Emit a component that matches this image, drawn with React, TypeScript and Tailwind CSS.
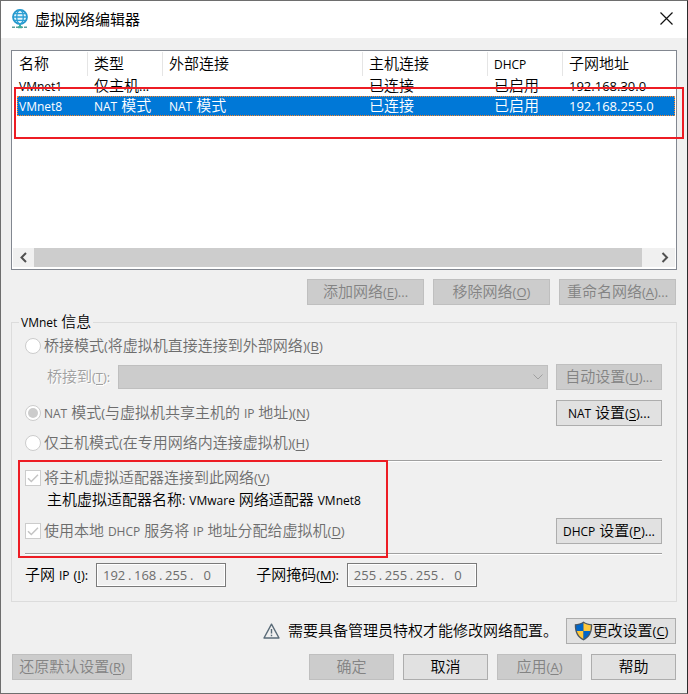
import { useId, type ReactNode } from "react";
import clsx from "clsx";

type Network = {
  name: string;
  type: string;
  external: string;
  host: string;
  dhcp: string;
  subnet: string;
};

const networks: Network[] = [
  {
    name: "VMnet1",
    type: "仅主机...",
    external: "-",
    host: "已连接",
    dhcp: "已启用",
    subnet: "192.168.30.0",
  },
  {
    name: "VMnet8",
    type: "NAT 模式",
    external: "NAT 模式",
    host: "已连接",
    dhcp: "已启用",
    subnet: "192.168.255.0",
  },
];

const columns = [
  { title: "名称", width: "w-[71px]" },
  { title: "类型", width: "w-[75px]" },
  { title: "外部连接", width: "w-[200px]" },
  { title: "主机连接", width: "w-[125px]" },
  { title: "DHCP", width: "w-[75px]" },
  { title: "子网地址", width: "" },
];

// Latin runs are set smaller than the Chinese text, words a step below
// punctuation and numbers; "&X" marks an access key.
function Caption({ text }: { text: string }) {
  return (
    <span className="inline-block pb-0.5 whitespace-nowrap">
      {text.split(/([\x21-\x7e]+)/).map((run, index) => {
        if (index % 2 === 0) {
          return run;
        }
        const [before, after] = run.split("&");
        return (
          <span
            className={clsx(
              "font-normal",
              /^[A-Za-z]/.test(run)
                ? "text-xs leading-none"
                : "text-[13px] leading-none",
            )}
            key={index}
          >
            {before}
            {after ? (
              <>
                <u className="underline-offset-2">{after[0]}</u>
                {after.slice(1)}
              </>
            ) : null}
          </span>
        );
      })}
    </span>
  );
}

function PushButton({
  text,
  disabled,
  className,
  icon,
}: {
  text: string;
  disabled?: boolean;
  className: string;
  icon?: ReactNode;
}) {
  return (
    <button
      className={clsx(
        "flex h-[26px] shrink-0 items-center justify-center border leading-5",
        disabled
          ? "border-[#bfbfbf] bg-[#cccccc] text-[#838383]"
          : "border-[#adadad] bg-[#e1e1e1] text-black",
        className,
      )}
      disabled={disabled}
      type="button"
    >
      {icon}
      <Caption text={text} />
    </button>
  );
}

function ModeRadio({ text, checked }: { text: string; checked?: boolean }) {
  return (
    <label className="flex items-center gap-[3px] text-[#6d6d6d]">
      <input
        className="grid size-4 appearance-none place-items-center rounded-full border border-[#cccccc] bg-white before:size-2.5 before:rounded-full checked:before:bg-[#cccccc]"
        defaultChecked={checked}
        disabled
        name="mode"
        type="radio"
      />
      <Caption text={text} />
    </label>
  );
}

function OptionCheckbox({ text }: { text: string }) {
  return (
    <label className="flex items-center gap-[3px] text-[#6d6d6d]">
      <span className="grid size-4">
        <input
          className="col-start-1 row-start-1 size-4 appearance-none border border-[#cccccc] bg-white"
          defaultChecked
          disabled
          type="checkbox"
        />
        <svg
          className="pointer-events-none col-start-1 row-start-1 size-4"
          fill="none"
          stroke="#c4c4c4"
          strokeWidth="1.5"
          viewBox="0 0 16 16"
        >
          <path d="M3 8.2 6.3 11.5 13 4.8" />
        </svg>
      </span>
      <Caption text={text} />
    </label>
  );
}

function AddressField({ text, octets }: { text: string; octets: string[] }) {
  const id = useId();

  return (
    <div className="flex items-center gap-2">
      <label htmlFor={`${id}-0`}>
        <Caption text={text} />
      </label>
      <div className="flex h-6 w-[130px] items-center border border-[#7a7a7a] bg-[#f0f0f0] pl-1 text-[13px] font-normal text-[#6d6d6d] ring-1 ring-white ring-inset">
        {octets.map((octet, index) => (
          <span className="flex items-center" key={index}>
            {index > 0 ? <span className="w-[5px] text-center">.</span> : null}
            <input
              aria-label={`${index + 1}`}
              className="w-[26px] text-center"
              defaultValue={octet}
              disabled
              id={`${id}-${index}`}
            />
          </span>
        ))}
      </div>
    </div>
  );
}

function Divider() {
  return <div className="h-0.5 border-t border-[#a0a0a0] bg-white" />;
}

function NetworkTable() {
  return (
    <div className="relative border border-[#828790] bg-white p-px">
      <div className="h-[196px] pl-1">
        <table className="w-full table-fixed border-separate border-spacing-0 text-left">
          <thead>
            <tr className="h-6">
              {columns.map((column, index) => (
                <th
                  className={clsx(
                    "p-0 font-[350]",
                    column.width,
                    index === 0 ? "pl-0.5" : "pl-1.5",
                    index < columns.length - 1 && "border-r border-[#e5e5e5]",
                  )}
                  key={column.title}
                >
                  <Caption text={column.title} />
                </th>
              ))}
            </tr>
          </thead>
          <tbody>
            {networks.map((network) => (
              <tr
                className={clsx(
                  "h-5 leading-[18px]",
                  network.name === "VMnet8" &&
                    "bg-[#0078d7] text-white outline-1 -outline-offset-1 outline-[#ff8728] outline-dotted",
                )}
                key={network.name}
              >
                {Object.values(network).map((value, index) => (
                  <td
                    className={clsx("p-0", index === 0 ? "pl-0.5" : "pl-1.5")}
                    key={index}
                  >
                    <Caption text={value} />
                  </td>
                ))}
              </tr>
            ))}
          </tbody>
        </table>
      </div>
      <div className="mb-px flex h-[19px] bg-[#f0f0f0]">
        <button
          aria-label="向左滚动"
          className="grid w-[21px] place-items-center"
          type="button"
        >
          <ScrollArrow d="M7 1 2.5 5.5 7 10" />
        </button>
        <div className="mr-3 flex-1 bg-[#cdcdcd]" />
        <button
          aria-label="向右滚动"
          className="grid w-[21px] place-items-center"
          type="button"
        >
          <ScrollArrow d="M2.5 1 7 5.5 2.5 10" />
        </button>
      </div>
      <div className="pointer-events-none absolute top-9 -right-2 left-0.5 h-[52px] border-2 border-[#ed1c24]" />
    </div>
  );
}

function ScrollArrow({ d }: { d: string }) {
  return (
    <svg
      className="h-[11px] w-[10px]"
      fill="none"
      stroke="#505050"
      strokeWidth="2"
      viewBox="0 0 10 11"
    >
      <path d={d} />
    </svg>
  );
}

function GlobeIcon() {
  return (
    <svg className="h-5 w-[18px]" fill="none" viewBox="0 0 18 20">
      <circle cx="9" cy="8" fill="#e4f5fc" r="7" stroke="#2497cc" strokeWidth="1.8" />
      <ellipse cx="9" cy="8" rx="3.3" ry="7" stroke="#2b9fd3" strokeWidth="1.3" />
      <path d="M2 8h14M3.2 4.6h11.6M3.2 11.4h11.6" stroke="#2b9fd3" strokeWidth="1.3" />
      <path d="M1 18.2h16" stroke="#5b9f9c" strokeDasharray="3 1" strokeWidth="1.6" />
      <path d="M7 18.2h4M9 16v2" stroke="#3fae9b" strokeWidth="2" />
    </svg>
  );
}

function ShieldIcon() {
  return (
    <svg className="h-5 w-[19px]" viewBox="0 0 19 20">
      <path
        d="M9.5.5C7 2.3 4 3 .8 3.2.5 11 3.2 16.5 9.5 19.5 15.8 16.5 18.5 11 18.2 3.2 15 3 12 2.3 9.5.5Z"
        fill="#4b5660"
      />
      <path d="M9.5 2C7.3 3.3 5 4 2.2 4.2 2.1 6.5 2.3 8.4 2.8 10H9.5Z" fill="#0065c8" />
      <path d="M9.5 2c2.2 1.3 4.5 2 7.3 2.2.1 2.3-.1 4.2-.6 5.8H9.5Z" fill="#ffc83a" />
      <path d="M2.8 10c1 3.7 3.3 6.3 6.7 8V10Z" fill="#ffc83a" />
      <path d="M16.2 10c-1 3.7-3.3 6.3-6.7 8V10Z" fill="#0065c8" />
    </svg>
  );
}

function WarningIcon() {
  return (
    <svg className="h-4 w-[17px]" fill="none" viewBox="0 0 17 16">
      <path d="M8.5 1.2 16 15H1Z" stroke="#5a6b78" strokeLinejoin="round" strokeWidth="1.4" />
      <path d="M8.5 6v4.5M8.5 11.8v1.5" stroke="#5a6b78" strokeWidth="1.4" />
    </svg>
  );
}

function NetworkInfo() {
  return (
    <fieldset className="mt-[7px] border border-[#dcdcdc] pr-3.5 pb-3.5 pl-[13px]">
      <legend className="-ml-1.5 h-5 px-0.5 leading-[18px]">
        <Caption text="VMnet 信息" />
      </legend>
      <div className="flex h-7 items-center">
        <ModeRadio text="桥接模式(将虚拟机直接连接到外部网络)(&B)" />
      </div>
      <div className="mt-1 flex items-center pl-[22px]">
        <label
          className="mr-2 text-[#a0a0a0] [text-shadow:1px_1px_#fff]"
          htmlFor="bridge"
        >
          <Caption text="桥接到(&T):" />
        </label>
        <div className="mr-2 grid flex-1 items-center">
          <select
            className="col-start-1 row-start-1 h-6 w-full appearance-none border border-[#bfbfbf] bg-[#cccccc]"
            disabled
            id="bridge"
          />
          <svg
            className="pointer-events-none col-start-1 row-start-1 mr-[5px] h-1.5 w-2.5 justify-self-end"
            fill="none"
            stroke="#a0a0a0"
            viewBox="0 0 10 6"
          >
            <path d="M.5.5 5 5 9.5.5" />
          </svg>
        </div>
        <PushButton className="w-[106px]" disabled text="自动设置(&U)..." />
      </div>
      <div className="mt-2.5 flex items-center justify-between">
        <ModeRadio checked text="NAT 模式(与虚拟机共享主机的 IP 地址)(&N)" />
        <PushButton className="w-[106px]" text="NAT 设置(&S)..." />
      </div>
      <div className="mt-1.5 flex h-[22px] items-center">
        <ModeRadio text="仅主机模式(在专用网络内连接虚拟机)(&H)" />
      </div>
      <div className="relative mt-1.5">
        <Divider />
        <div className="mt-1.5 flex h-5 items-center">
          <OptionCheckbox text="将主机虚拟适配器连接到此网络(&V)" />
        </div>
        <p className="mt-0.5 flex h-5 items-center pl-[22px]">
          <Caption text="主机虚拟适配器名称: VMware 网络适配器 VMnet8" />
        </p>
        <div className="mt-2 flex items-center justify-between">
          <OptionCheckbox text="使用本地 DHCP 服务将 IP 地址分配给虚拟机(&D)" />
          <PushButton className="w-[106px]" text="DHCP 设置(&P)..." />
        </div>
        <div className="mt-[9px]">
          <Divider />
        </div>
        <div className="pointer-events-none absolute top-0 -left-[7px] h-[98px] w-[370px] border-2 border-[#ed1c24]" />
      </div>
      <div className="mt-2 flex gap-[30px]">
        <AddressField octets={["192", "168", "255", "0"]} text="子网 IP (&I):" />
        <AddressField octets={["255", "255", "255", "0"]} text="子网掩码(&M):" />
      </div>
    </fieldset>
  );
}

export default function App() {
  return (
    <div className="border border-[#6e6e6e] border-r-[#2b2b2b] bg-[#f0f0f0] font-['Open_Sans','Noto_Sans_CJK_SC',sans-serif] text-[15px] leading-5 font-[350] text-black">
      <header className="flex h-[37px] items-center bg-white pr-3.5 pb-0.5 pl-2.5">
        <GlobeIcon />
        <h1 className="ml-1.5 flex-1 font-normal">虚拟网络编辑器</h1>
        <button aria-label="关闭" type="button">
          <svg className="size-[13px]" stroke="#111" strokeWidth="1.2" viewBox="0 0 13 13">
            <path d="m.5.5 12 12M12.5.5l-12 12" />
          </svg>
        </button>
      </header>
      <main className="px-2.5 pt-3 pb-[13px]">
        <NetworkTable />
        <div className="mt-[9px] mr-px flex justify-end gap-[9px]">
          <PushButton className="w-[117px]" disabled text="添加网络(&E)..." />
          <PushButton className="w-[117px]" disabled text="移除网络(&O)" />
          <PushButton className="w-[117px]" disabled text="重命名网络(&A)..." />
        </div>
        <NetworkInfo />
        <div className="mt-4 mr-px flex items-center justify-end">
          <WarningIcon />
          <p className="mr-2 ml-2">
            <Caption text="需要具备管理员特权才能修改网络配置。" />
          </p>
          <PushButton
            className="w-[110px]"
            icon={<ShieldIcon />}
            text="更改设置(&C)"
          />
        </div>
        <footer className="mt-2.5 mr-px ml-px flex gap-[9px]">
          <PushButton className="mr-auto w-[120px]" disabled text="还原默认设置(&R)" />
          <PushButton className="w-[85px]" disabled text="确定" />
          <PushButton className="w-[85px]" text="取消" />
          <PushButton className="w-[85px]" disabled text="应用(&A)" />
          <PushButton className="w-[85px]" text="帮助" />
        </footer>
      </main>
    </div>
  );
}
